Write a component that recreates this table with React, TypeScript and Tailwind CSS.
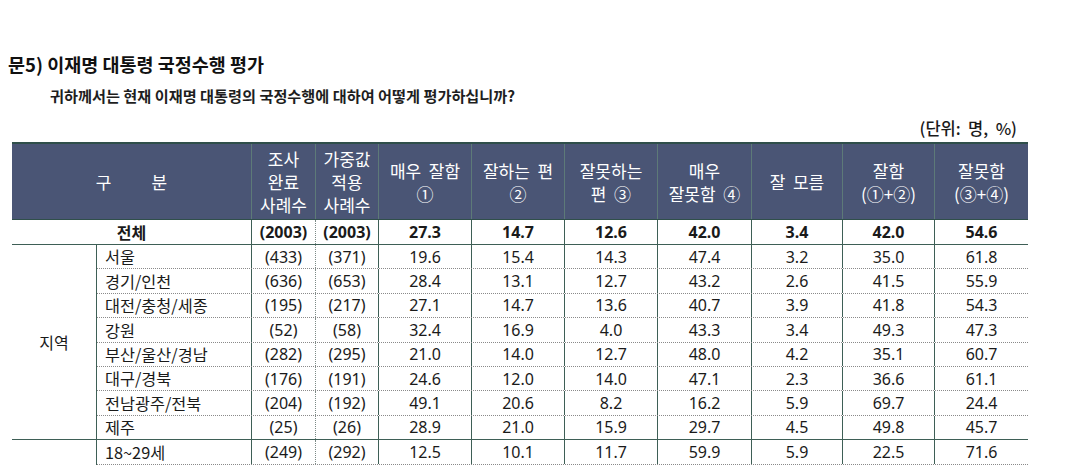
const rows: string[][] = [
  ["서울", "(433)", "(371)", "19.6", "15.4", "14.3", "47.4", "3.2", "35.0", "61.8"],
  ["경기/인천", "(636)", "(653)", "28.4", "13.1", "12.7", "43.2", "2.6", "41.5", "55.9"],
  ["대전/충청/세종", "(195)", "(217)", "27.1", "14.7", "13.6", "40.7", "3.9", "41.8", "54.3"],
  ["강원", "(52)", "(58)", "32.4", "16.9", "4.0", "43.3", "3.4", "49.3", "47.3"],
  ["부산/울산/경남", "(282)", "(295)", "21.0", "14.0", "12.7", "48.0", "4.2", "35.1", "60.7"],
  ["대구/경북", "(176)", "(191)", "24.6", "12.0", "14.0", "47.1", "2.3", "36.6", "61.1"],
  ["전남광주/전북", "(204)", "(192)", "49.1", "20.6", "8.2", "16.2", "5.9", "69.7", "24.4"],
  ["제주", "(25)", "(26)", "28.9", "21.0", "15.9", "29.7", "4.5", "49.8", "45.7"],
];

const ageRow = ["18~29세", "(249)", "(292)", "12.5", "10.1", "11.7", "59.9", "5.9", "22.5", "71.6"];
const total = ["(2003)", "(2003)", "27.3", "14.7", "12.6", "42.0", "3.4", "42.0", "54.6"];

// widths of the 9 value columns
const widths = ["w-[64px]", "w-[63px]", "w-[93px]", "w-[93px]", "w-[93px]", "w-[94px]", "w-[91px]", "w-[92px]", "w-[93px]"];

function cellBorder(i: number) {
  if (i === 0) return "border-r border-dotted border-[#7c8a86]";
  if (i === 8) return "";
  return "border-r border-[#3e5f56]";
}

function Values({ values, bold }: { values: string[]; bold?: boolean }) {
  return (
    <>
      {values.map((v, i) => (
        <div
          key={i}
          className={`${widths[i]} ${cellBorder(i)} flex h-full items-center justify-center font-['Noto_Sans','Noto_Sans_CJK_KR',sans-serif] text-[16px] ${bold ? "font-bold" : ""}`}
        >
          {v}
        </div>
      ))}
    </>
  );
}

function Row({ data, last }: { data: string[]; last?: boolean }) {
  return (
    <div
      className={`flex h-[24.4px] border-b ${last ? "border-[#3e5f56]" : "border-dotted border-[#8a8a8a]"}`}
    >
      <div className="flex h-full w-[155px] items-center border-r border-[#3e5f56] pl-2 text-[16.3px]">
        {data[0]}
      </div>
      <Values values={data.slice(1)} />
    </div>
  );
}

const heads: string[][] = [
  ["조사", "완료", "사례수"],
  ["가중값", "적용", "사례수"],
  ["매우  잘함", "①"],
  ["잘하는  편", "②"],
  ["잘못하는", "편  ③"],
  ["매우", "잘못함  ④"],
  ["잘  모름"],
  ["잘함", "(①+②)"],
  ["잘못함", "(③+④)"],
];

export default function App() {
  return (
    <div className="min-h-screen bg-white font-['Noto_Sans_CJK_KR',sans-serif] text-[#1a1a1a]">
      <div className="pt-[52px] pl-2">
        <h1 className="text-[18.5px] leading-[25px] font-bold text-[#111]">문5) 이재명 대통령 국정수행 평가</h1>
        <p className="mt-[8px] pl-[42px] text-[15.2px] leading-[21px] font-bold text-[#1e1e1e]">
          귀하께서는 현재 이재명 대통령의 국정수행에 대하여 어떻게 평가하십니까?
        </p>
      </div>

      <div className="ml-3 w-[1016px]">
        <div className="mt-[12px] pr-[11px] text-right text-[16.5px] leading-[21px] font-medium whitespace-pre">
          (단위:  명,  %)
        </div>

        {/* Header */}
        <div className="mt-[3px] flex h-[78px] border-t-2 border-b border-[#2f4f4a] bg-[#4a5575] text-[17px] leading-[23px] text-white">
          <div className="flex w-[240px] items-center justify-center gap-10 border-r border-[#5d7a78]">
            <span>구</span>
            <span>분</span>
          </div>
          {heads.map((h, i) => (
            <div
              key={i}
              className={`${widths[i]} flex flex-col items-center justify-center text-center ${i === 8 ? "" : "border-r border-[#5d7a78]"}`}
            >
              {h.map((l, j) => (
                <span key={j} className="block h-[23px] whitespace-pre">
                  {l}
                </span>
              ))}
            </div>
          ))}
        </div>

        {/* 전체 */}
        <div className="flex h-[25px] border-b border-[#3e5f56]">
          <div className="flex w-[240px] items-center justify-center border-r border-[#3e5f56] text-[16px] font-bold">
            전체
          </div>
          <Values values={total} bold />
        </div>

        {/* 지역 */}
        <div className="flex">
          <div className="flex w-[85px] items-center justify-center border-r border-b border-[#3e5f56] text-[16px]">
            지역
          </div>
          <div className="flex flex-col">
            {rows.map((r, i) => (
              <Row key={i} data={r} last={i === rows.length - 1} />
            ))}
          </div>
        </div>

        {/* 연령 */}
        <div className="flex">
          <div className="w-[85px] border-r border-[#3e5f56]" />
          <div className="flex flex-col">
            <Row data={ageRow} />
          </div>
        </div>
      </div>
    </div>
  );
}
